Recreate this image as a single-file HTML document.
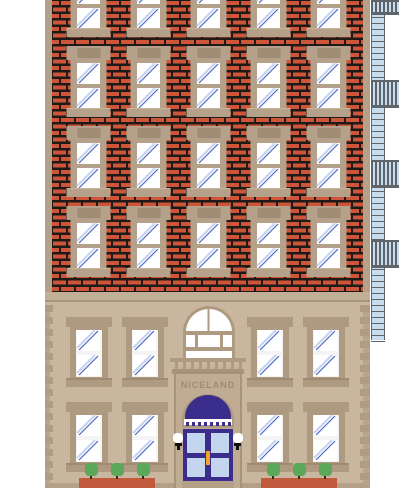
<!DOCTYPE html>
<html><head><meta charset="utf-8"><style>
*{margin:0;padding:0;box-sizing:border-box}
body{width:405px;height:488px;background:#fff;position:relative;overflow:hidden;font-family:"Liberation Sans",sans-serif}
.a{position:absolute}
</style></head><body>
<svg class="a" style="left:0;top:0" width="405" height="488">
<defs>
<pattern id="br" x="0" y="0" width="30" height="13" patternUnits="userSpaceOnUse">
<rect width="30" height="13" fill="#1e1a18"/>
<rect x="1" y="1" width="13" height="4" fill="#cf5538"/>
<rect x="16" y="1" width="13" height="4" fill="#cf5538"/>
<rect x="-7" y="7.5" width="13" height="4" fill="#cf5538"/>
<rect x="8" y="7.5" width="13" height="4" fill="#cf5538"/>
<rect x="23" y="7.5" width="13" height="4" fill="#cf5538"/>
</pattern>
<g id="pane">
<rect width="23" height="21" fill="#fff"/>
<line x1="2" y1="20" x2="21" y2="1" stroke="#4a66c4" stroke-width="1.2"/>
<line x1="0" y1="18" x2="18" y2="0" stroke="#c6d2ee" stroke-width="2"/>
</g>
</defs>
<rect x="45" y="0" width="325" height="300" fill="#b5a089"/>
<rect x="52" y="0" width="311" height="292" fill="url(#br)"/>
<g id="fe"></g>
<rect x="45" y="292" width="325" height="196" fill="#c8b79e"/>
<rect x="45" y="292" width="325" height="8" fill="#c2b096"/>
<rect x="45" y="300" width="325" height="2" fill="#a8947a"/>
<rect x="45" y="483" width="325" height="5" fill="#b3a086"/>
<g id="win"></g>
</svg>
<div class="a" style="left:174px;top:372px;width:68px;height:116px;background:#bfac92;border:2px solid #a8937a;border-bottom:none"></div>
<div class="a" style="left:176px;top:380px;width:64px;text-align:center;font-size:9px;font-weight:bold;letter-spacing:1px;color:#a08b72">NICELAND</div>
<svg class="a" style="left:0;top:0" width="405" height="488" id="s2"></svg>
<script>
const NS="http://www.w3.org/2000/svg";
function r(p,x,y,w,h,f){const e=document.createElementNS(NS,'rect');e.setAttribute('x',x);e.setAttribute('y',y);e.setAttribute('width',w);e.setAttribute('height',h);e.setAttribute('fill',f);p.appendChild(e);return e}
function u(p,x,y){const e=document.createElementNS(NS,'use');e.setAttribute('href','#pane');e.setAttribute('x',x);e.setAttribute('y',y);p.appendChild(e)}
const W=document.getElementById('win'),F=document.getElementById('fe');
[88.5,148.5,208.5,268.5,328.5].forEach(c=>{
 for(let k=0;k<4;k++){
  const o=80*k-80;
  if(k>0){r(W,c-22,o+46,44,14,'#b5a089');r(W,c-11,o+48,23,12,'#a08c74');}
  r(W,c-18,o+58,36,58,'#b5a089');
  u(W,c-11.5,o+63);u(W,c-11.5,o+88);
  r(W,c-22,o+108,44,9,'#b5a089');r(W,c-22,o+108,44,1,'#c8b59c');
 }
});
r(W,45,0,7,292,'#b5a089');r(W,363,0,7,292,'#b5a089');
for(let y=305;y<480;y+=12){r(W,45,y,8,7,'#b09c82');r(W,360,y,10,7,'#b09c82');r(W,45,y+7,5,5,'#b8a48a');r(W,363,y+7,7,5,'#b8a48a')}
[89,145,270,326].forEach(c=>{
 [0,85].forEach(o=>{
  r(W,c-23,o+317,46,10,'#ae9a80');
  r(W,c-19,o+326,38,54,'#ae9a80');
  r(W,c-13,o+330,26,47,'#f4f4f4');
  u(W,c-12,o+330);u(W,c-12,o+355);
  r(W,c-23,o+378,46,9,'#ae9a80');r(W,c-23,o+378,46,2,'#a08b72');
 });
});
r(F,371,0,14,340,'#c8dcf0');
for(let y=0;y<340;y+=6){r(F,371,y+5,14,1,'#5e6468');}
r(F,371,0,1,340,'#5e6468');r(F,384,0,1,340,'#5e6468');
[[0,15],[80,28],[160,28],[240,28]].forEach(([y,h])=>{
 r(F,371,y,28,h,'#c8dcf0');
 for(let x=371;x<399;x+=4)r(F,x,y,2,h,'#5e6468');
 r(F,371,y+h-3,28,3,'#5e6468');r(F,371,y,28,2,'#5e6468');
});
const S=document.getElementById('s2');
S.innerHTML=`
<path d="M183 360 V332 A25 25 0 0 1 235 332 V360 Z" fill="#ae9a80"/>
<path d="M186 360 V332 A22.5 22.5 0 0 1 232 332 V360 Z" fill="#fff"/>
<rect x="207.5" y="308" width="2" height="26" fill="#ae9a80"/>
<rect x="185" y="331" width="48" height="4" fill="#ae9a80"/>
<rect x="185" y="347" width="48" height="4" fill="#ae9a80"/>
<rect x="195" y="333" width="3" height="16" fill="#ae9a80"/>
<rect x="220" y="333" width="3" height="16" fill="#ae9a80"/>
<rect x="170" y="358" width="76" height="4" fill="#ae9a80"/>
<rect x="172" y="369" width="72" height="5" fill="#a8937a"/>
${[175,183,191,199,207,215,223,231,239].map(x=>`<rect x="${x}" y="361" width="3" height="9" fill="#ae9a80"/>`).join('')}
<path d="M182 428 V420 A26 26 0 0 1 234 420 V428 Z" fill="#ae9a80"/>
<path d="M185 422 V417 A23 22 0 0 1 231 417 V422 Z" fill="#3b2d8c"/>
<rect x="184" y="419" width="48" height="6" fill="#fff"/>
${[186,192,198,204,210,216,222,228].map(x=>`<rect x="${x}" y="422" width="3" height="4" fill="#3b2d8c"/>`).join('')}
<rect x="183" y="429" width="50" height="52" fill="#3b2d8c"/>
<rect x="187" y="433" width="18" height="20" fill="#c3d6ee"/>
<rect x="211" y="433" width="18" height="20" fill="#c3d6ee"/>
<rect x="187" y="458" width="18" height="19" fill="#c3d6ee"/>
<rect x="211" y="458" width="18" height="19" fill="#c3d6ee"/>
<rect x="206" y="451" width="4" height="14" fill="#f3a52a"/>
<rect x="182" y="481" width="52" height="7" fill="#b3a086"/>
<rect x="173" y="433" width="10" height="10" rx="4" fill="#fff"/>
<rect x="175" y="443" width="7" height="3" fill="#111"/><rect x="177" y="446" width="3" height="4" fill="#111"/>
<rect x="233" y="433" width="10" height="10" rx="4" fill="#fff"/>
<rect x="234" y="443" width="7" height="3" fill="#111"/><rect x="236" y="446" width="3" height="4" fill="#111"/>
<rect x="79" y="478" width="76" height="10" fill="#c25a3e"/>
<rect x="261" y="478" width="76" height="10" fill="#c25a3e"/>
${[91,117,143,273,299,325].map(x=>`<rect x="${x-6}" y="463" width="13" height="13" rx="4" fill="#5ca85a"/><rect x="${x-1}" y="476" width="2" height="3" fill="#3a2a1a"/>`).join('')}
`;
</script>
</body></html>
